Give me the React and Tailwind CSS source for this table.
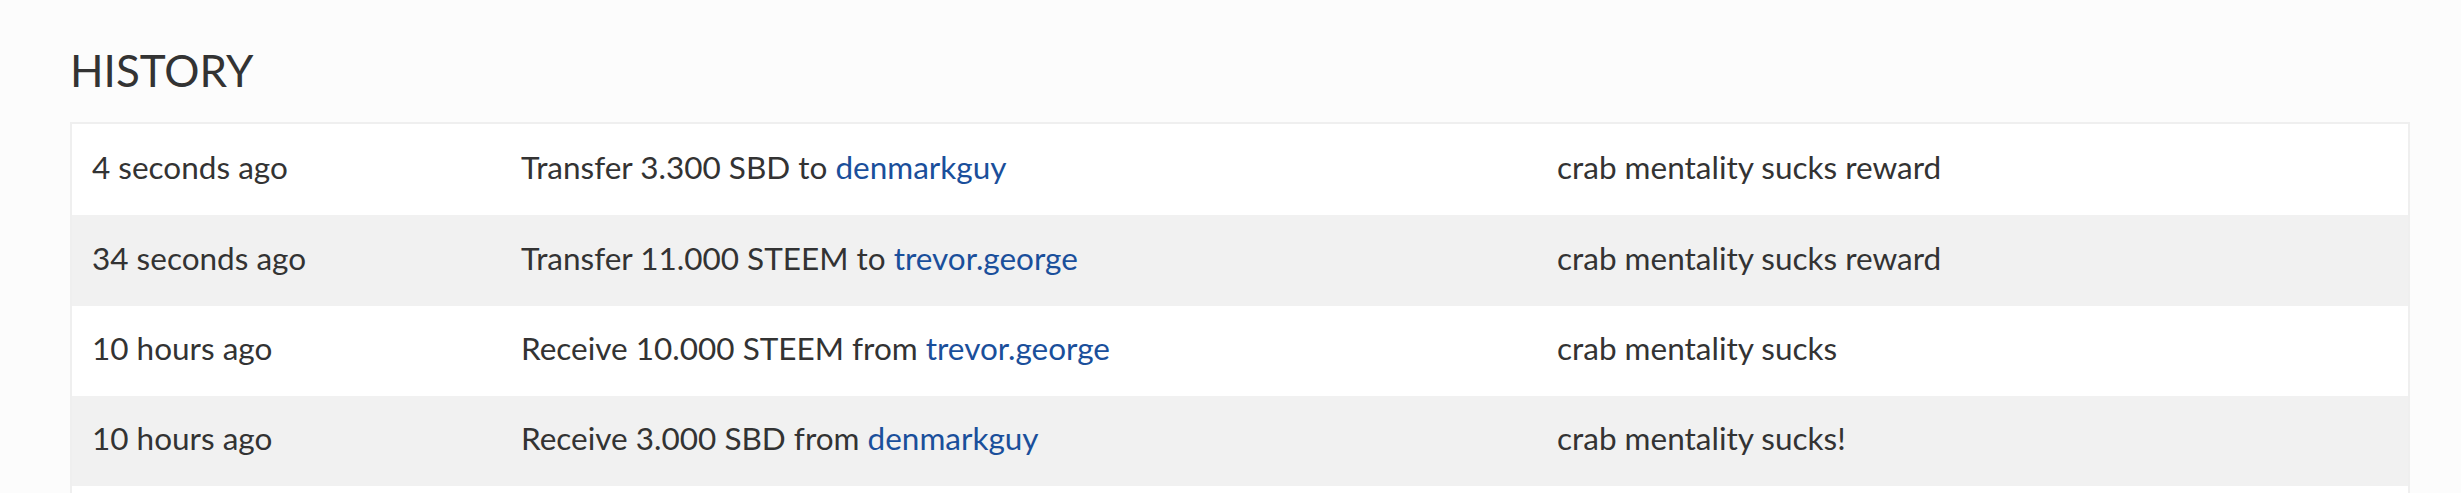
const rows = [
  { time: '4 seconds ago', text: 'Transfer 3.300 SBD to ', user: 'denmarkguy', memo: 'crab mentality sucks reward' },
  { time: '34 seconds ago', text: 'Transfer 11.000 STEEM to ', user: 'trevor.george', memo: 'crab mentality sucks reward' },
  { time: '10 hours ago', text: 'Receive 10.000 STEEM from ', user: 'trevor.george', memo: 'crab mentality sucks' },
  { time: '10 hours ago', text: 'Receive 3.000 SBD from ', user: 'denmarkguy', memo: 'crab mentality sucks!' },
];

const heights = ['h-[91px]', 'h-[91px]', 'h-[90px]', 'h-[90px]'];

export default function App() {
  return (
    <div className="bg-[#fcfcfc] text-[#333] font-['Lato',sans-serif] overflow-hidden h-[493px]">
      <div className="pl-[70px] pt-[48px] w-[2410px]">
        <h2 className="text-[44px] leading-none font-normal">HISTORY</h2>
        <div className="mt-[30px] border-2 border-b-0 border-[#efefef] bg-white">
          {rows.map((r, i) => (
            <div
              key={i}
              className={`flex items-center text-[31.5px] ${heights[i]} ${i % 2 === 1 ? 'bg-[#f1f1f1]' : 'bg-white'}`}
            >
              <div className="w-[429px] pl-[20px] pb-[4px]">{r.time}</div>
              <div className="w-[1036px] pl-[20px] pb-[4px]">
                {r.text}
                <a href="#" className="text-[#1a4f9b]">{r.user}</a>
              </div>
              <div className="flex-1 pl-[20px] pb-[4px]">{r.memo}</div>
            </div>
          ))}
          <div className="h-[40px] bg-white" />
        </div>
      </div>
    </div>
  );
}
